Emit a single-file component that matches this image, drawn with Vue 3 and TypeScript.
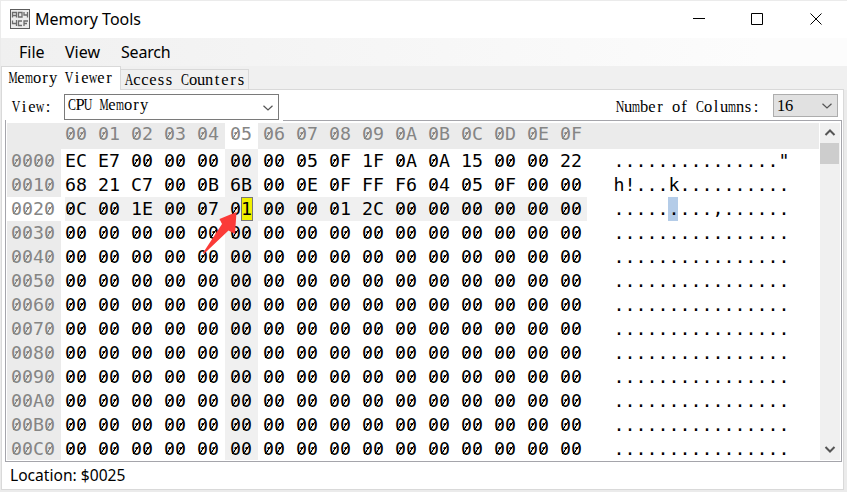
<script setup lang="ts">
import { h, type FunctionalComponent } from 'vue'

interface Row {
  address: string
  bytes: string[]
  ascii: string
}

// Label text set on a fixed 8px pitch; wide letters are condensed to fit.
const Label: FunctionalComponent<{ text: string }> = (props) =>
  h(
    'span',
    { class: 'fixed-label' },
    Array.from(props.text).map((ch) =>
      h('span', { class: ['ch', { widest: 'Mm'.includes(ch), wide: 'NVACUw'.includes(ch) }] }, ch),
    ),
  )
Label.props = ['text']

// Hex digits with a slash drawn through every zero.
const Hex: FunctionalComponent<{ text: string }> = (props) =>
  Array.from(props.text).map((ch) => h('span', { class: ch === '0' ? 'digit zero' : 'digit' }, ch))
Hex.props = ['text']

const selectedRow = 2
const selectedCol = 5
const columns: string[] = Array.from({ length: 16 }, (_, i) => '0' + i.toString(16).toUpperCase())
const memory: string[] = [
  'EC E7 00 00 00 00 00 05 0F 1F 0A 0A 15 00 00 22',
  '68 21 C7 00 0B 6B 00 0E 0F FF F6 04 05 0F 00 00',
  '0C 00 1E 00 07 01 00 00 01 2C 00 00 00 00 00 00',
]

const rows: Row[] = Array.from({ length: 13 }, (_, i) => {
  const bytes = memory[i] ? memory[i].split(' ') : Array<string>(16).fill('00')
  const ascii = bytes
    .map((b) => {
      const code = parseInt(b, 16)
      return code > 32 && code < 127 ? String.fromCharCode(code) : '.'
    })
    .join('')
  return { address: '00' + i.toString(16).toUpperCase() + '0', bytes, ascii }
})
</script>

<template>
  <div class="window">
    <header class="title-bar">
      <svg class="app-icon" width="20" height="20" viewBox="0 0 20 20">
        <rect x="0.5" y="0.5" width="19" height="19" fill="#ececec" stroke="#5c5c5c" />
        <g fill="none" stroke="#6c6c6c" stroke-width="1.3">
          <path d="M2.500 8.500v-5h4v5M2.500 6.500h4M8.500 3.500h3.500v4.500H8.500zM14 3v3h3.500M17.500 3v5.500" />
          <path d="M2.500 11.500v3h3.500M6.500 11v6M12 12H8.500v4.500H12M14 17v-5h4M14 14.500h3" />
        </g>
      </svg>
      <span class="title">Memory Tools</span>
      <svg class="controls" width="128" height="14" viewBox="0 0 128 14" fill="none" stroke="#000">
        <path d="M0 6.500h12M58.500 1.500h11v11h-11zM117.500 1.500l11 11M128.500 1.500l-11 11" />
      </svg>
    </header>
    <nav class="menu">
      <span class="m-file">File</span>
      <span class="m-view">View</span>
      <span class="m-search">Search</span>
    </nav>
    <div class="tabs">
      <div class="tab active"><Label text="Memory Viewer" /></div>
      <div class="tab"><Label text="Access Counters" /></div>
      <div class="tab-rest"></div>
    </div>
    <main class="page">
      <div class="toolbar">
        <div class="label"><Label text="View:" /></div>
        <div class="combo">
          <Label text="CPU Memory" />
          <svg width="10" height="6" viewBox="0 0 10 6"><path d="M0.500 0.700L5 5L9.500 0.700" /></svg>
        </div>
        <div class="label cols"><Label text="Number of Columns:" /></div>
        <div class="combo small">
          <Label text="16" />
          <svg width="10" height="6" viewBox="0 0 10 6"><path d="M0.500 0.700L5 5L9.500 0.700" /></svg>
        </div>
      </div>
      <div class="frame">
        <div class="frame-line"></div>
        <div class="viewer">
          <div class="grid">
            <div class="row head">
              <div class="address"></div>
              <div v-for="(c, i) in columns" :key="c" class="cell" :class="{ current: i === selectedCol }">
                <Hex :text="c" />
              </div>
            </div>
            <div v-for="(r, ri) in rows" :key="r.address" class="row" :class="{ selected: ri === selectedRow }">
              <div class="address"><Hex :text="r.address" /></div>
              <div
                v-for="(b, ci) in r.bytes"
                :key="ci"
                class="cell"
                :class="{ column: ci === selectedCol, target: ri === selectedRow && ci === selectedCol }"
              >
                <Hex :text="b" />
              </div>
              <div class="ascii">
                <span v-for="(ch, ci) in r.ascii" :key="ci" :class="{ picked: ri === selectedRow && ci === selectedCol }">{{ ch }}</span>
              </div>
            </div>
          </div>
          <div class="scrollbar">
            <svg width="20" height="20" viewBox="0 0 20 20"><path d="M5.500 12L10 7.500L14.500 12" /></svg>
            <div class="thumb"></div>
            <svg class="down" width="20" height="20" viewBox="0 0 20 20"><path d="M5.500 7L10 11.500L14.500 7" /></svg>
          </div>
        </div>
      </div>
      <footer class="status">Location: $0025</footer>
    </main>
    <svg class="arrow" width="36" height="44" viewBox="0 0 36 44">
      <path d="M34.500 1L17.500 8L20 13L1.300 41.500Q0.800 43.500 2.600 42.300L26.500 19.500L33 23Z" fill="#fb3b38" />
    </svg>
  </div>
</template>

<style>
body {
  margin: 0;
  background: #e6e6e6;
}
</style>

<style scoped>
* {
  box-sizing: border-box;
}
.window {
  position: relative;
  width: 847px;
  height: 492px;
  padding: 1px 0 2px 1px;
  overflow: hidden;
  background: #ebebeb;
  color: #000;
  font-family: 'Noto Sans', sans-serif;
  font-size: 16px;
}
.title-bar {
  display: flex;
  align-items: center;
  height: 37px;
  padding-left: 9px;
  background: #fff;
}
.app-icon {
  display: block;
  margin-top: -1px;
}
.title {
  margin: -1px 0 0 5px;
  font-size: 16px;
}
.controls {
  margin-left: auto;
  margin-right: 26px;
  margin-top: -1px;
  overflow: visible;
}
.menu {
  display: flex;
  align-items: center;
  height: 28px;
  padding-left: 18px;
  background: linear-gradient(90deg, #f0f0f0, #fcfcfc 90%);
}
.menu span {
  white-space: nowrap;
}
.m-file {
  width: 46px;
}
.m-view {
  width: 56px;
}
.m-search {
  letter-spacing: -0.2px;
}
.fixed-label {
  display: inline-flex;
  height: 20px;
  vertical-align: top;
  font: 16.5px/20px 'Liberation Serif', serif;
}
.fixed-label :deep(.ch) {
  display: flex;
  justify-content: center;
  width: 8px;
  height: 20px;
}
.fixed-label :deep(.wide) {
  transform: scaleX(0.72);
}
.fixed-label :deep(.widest) {
  transform: scaleX(0.62);
}
.tabs {
  display: flex;
  align-items: flex-end;
  width: 846px;
  height: 24px;
  padding-right: 3px;
  background: #f0f0f0;
}
.tab {
  width: 128px;
  height: 21px;
  padding: 0 0 0 4px;
  border: 1px solid #d9d9d9;
  border-left: 0;
}
.tab.active {
  width: 120px;
  height: 24px;
  padding: 1px 0 0 7px;
  background: #fff;
  border: 1px solid #d9d9d9;
  border-bottom: 0;
}
.tab-rest {
  flex: 1;
  border-bottom: 1px solid #d9d9d9;
}
.page {
  width: 843px;
  height: 400px;
  border: 1px solid #d9d9d9;
  border-top: 0;
  background: #fff;
}
.toolbar {
  display: flex;
  height: 30px;
  padding: 4px 5px 0 10px;
}
.label {
  width: 52px;
  padding-top: 3px;
}
.label.cols {
  width: 157px;
  margin-left: auto;
  padding-top: 3px;
}
.combo {
  display: flex;
  justify-content: space-between;
  width: 215px;
  height: 26px;
  padding: 0 5px 0 3px;
  border: 1px solid #7a7a7a;
}
.combo svg {
  margin-top: 10px;
}
.combo path,
.scrollbar path {
  fill: none;
  stroke: #555;
  stroke-width: 1.2;
}
.combo.small {
  height: 23px;
  width: 65px;
  padding-top: 1px;
  background: #e1e1e1;
  border-color: #adadad;
}
.combo.small svg {
  margin-top: 7px;
}
.frame {
  width: 837px;
  height: 342px;
  margin-left: 3px;
  border: 1px solid #a5a5ab;
  border-top: 0;
}
.frame-line {
  height: 1px;
  margin-left: 277px;
  background: #a5a5ab;
}
.viewer {
  display: flex;
  height: 340px;
  padding: 2px 1px 1px;
}
.grid {
  width: 812px;
  margin-right: 1px;
  overflow: hidden;
  font: 18.27px/24px 'DejaVu Sans Mono', monospace;
}
.row {
  display: flex;
  height: 24px;
}
.row.head {
  height: 26px;
  background: #ebebeb;
  color: #858585;
  line-height: 22px;
}
.address {
  display: flex;
  flex: none;
  width: 54px;
  padding-left: 4px;
  background: #ebebeb;
  color: #858585;
}
.selected .address {
  background: #fff;
}
.cell {
  display: flex;
  flex: none;
  width: 33px;
  padding-left: 5px;
}
.address + .cell {
  width: 32px;
  padding-left: 4px;
}
.cell.column,
.selected .cell {
  background: #f0f0f0;
}
.selected .address + .cell {
  width: 28px;
  margin-left: 4px;
  padding-left: 0;
}
.selected .cell:nth-child(17) {
  width: 32px;
  margin-right: 1px;
}
.cell.current {
  background: #fff;
}
.grid :deep(.digit) {
  flex: none;
  width: 11px;
}
.grid :deep(.zero) {
  background: linear-gradient(125deg, transparent 44%, currentColor 47%, currentColor 53%, transparent 56%) 2px 8px / 7px 9px no-repeat;
}
.head :deep(.zero) {
  background-position-y: 7px;
}
.target :deep(.digit:last-child) {
  width: 12px;
  height: 24px;
  background: #f0f000;
  outline: 1px solid #777;
  outline-offset: -1px;
}
.ascii {
  display: flex;
  padding-left: 25px;
}
.ascii span {
  width: 11px;
  padding-left: 0.5px;
}
.ascii .picked {
  background: linear-gradient(#b4cce8, #b4cce8) 0 0 / 10px 24px no-repeat;
}
.scrollbar {
  width: 20px;
  background: #f0f0f0;
  display: flex;
  flex-direction: column;
}
.scrollbar path {
  stroke-width: 2;
}
.thumb {
  width: 19px;
  height: 21px;
  background: #cdcdcd;
}
.down {
  margin-top: auto;
}
.status {
  padding-left: 8px;
  font-size: 15.6px;
  line-height: 27px;
}
.arrow {
  position: absolute;
  left: 202px;
  top: 211px;
}
</style>
